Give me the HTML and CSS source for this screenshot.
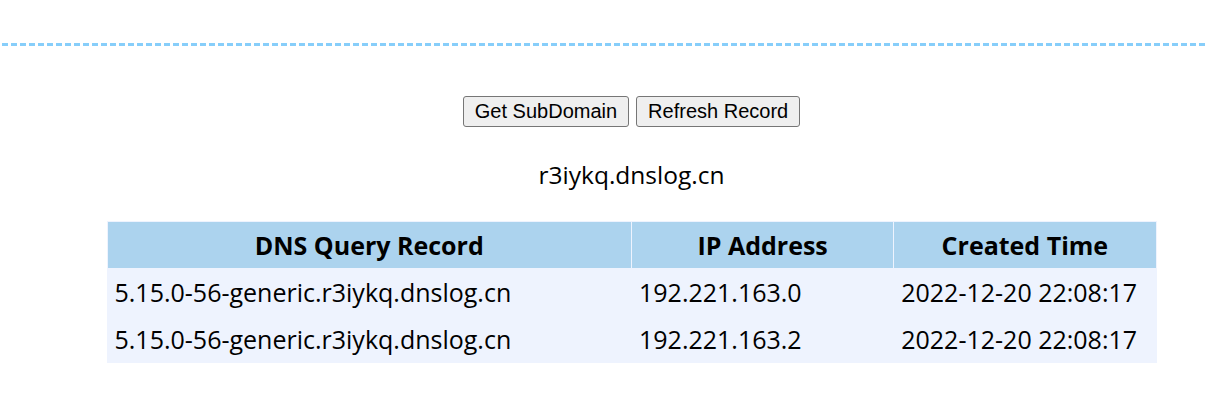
FILE: index.html
```html
<!DOCTYPE html>
<html>
<head>
<meta charset="utf-8">
<title>DNSLog</title>
<link rel="stylesheet" href="styles.css">
</head>
<body>
<div class="topline"></div>
<div class="wrap">
  <div class="actions">
    <button class="btn">Get SubDomain</button>
    <button class="btn">Refresh Record</button>
  </div>
  <div class="domain">r3iykq.dnslog.cn</div>
  <table class="records">
    <thead>
      <tr><th class="c1">DNS Query Record</th><th class="c2">IP Address</th><th class="c3">Created Time</th></tr>
    </thead>
    <tbody>
      <tr><td>5.15.0-56-generic.r3iykq.dnslog.cn</td><td>192.221.163.0</td><td>2022-12-20 22:08:17</td></tr>
      <tr><td>5.15.0-56-generic.r3iykq.dnslog.cn</td><td>192.221.163.2</td><td>2022-12-20 22:08:17</td></tr>
    </tbody>
  </table>
</div>
</body>
</html>
```
FILE: styles.css
```css
html, body {
  margin: 0;
  padding: 0;
  background: #ffffff;
}
body {
  font-family: "Open Sans", "Noto Sans", sans-serif;
  color: #000;
}
.topline {
  margin: 43px 2px 0 2px;
  height: 3px;
  background: repeating-linear-gradient(to right, #87cefa 0, #87cefa 6px, transparent 6px, transparent 9px);
}
.wrap {
  padding-left: 56px;
}
.actions {
  margin-top: 50px;
  display: flex;
  justify-content: center;
  gap: 7px;
}
.btn {
  font-family: "Liberation Sans", Arial, sans-serif;
  font-size: 20px;
  height: 31px;
  padding: 0 11px;
  background: #efefef;
  border: 1px solid #767676;
  border-radius: 3px;
  color: #000;
}
.domain {
  margin-top: 30px;
  text-align: center;
  font-size: 24.5px;
  line-height: 36px;
}
.records {
  margin: 28px auto 0 auto;
  width: 1050px;
  border-collapse: separate;
  border-spacing: 1px;
  background: #eef3fe;
  font-size: 25px;
}
.records th {
  background: #acd3ee;
  height: 46px;
  padding: 0;
  font-size: 25px;
  font-weight: bold;
  text-align: center;
}
.records td {
  height: 46px;
  padding: 0 0 0 7px;
  text-align: left;
}
.c1 { width: 523px; }
.c2 { width: 261px; }
.c3 { width: 261px; }
```
